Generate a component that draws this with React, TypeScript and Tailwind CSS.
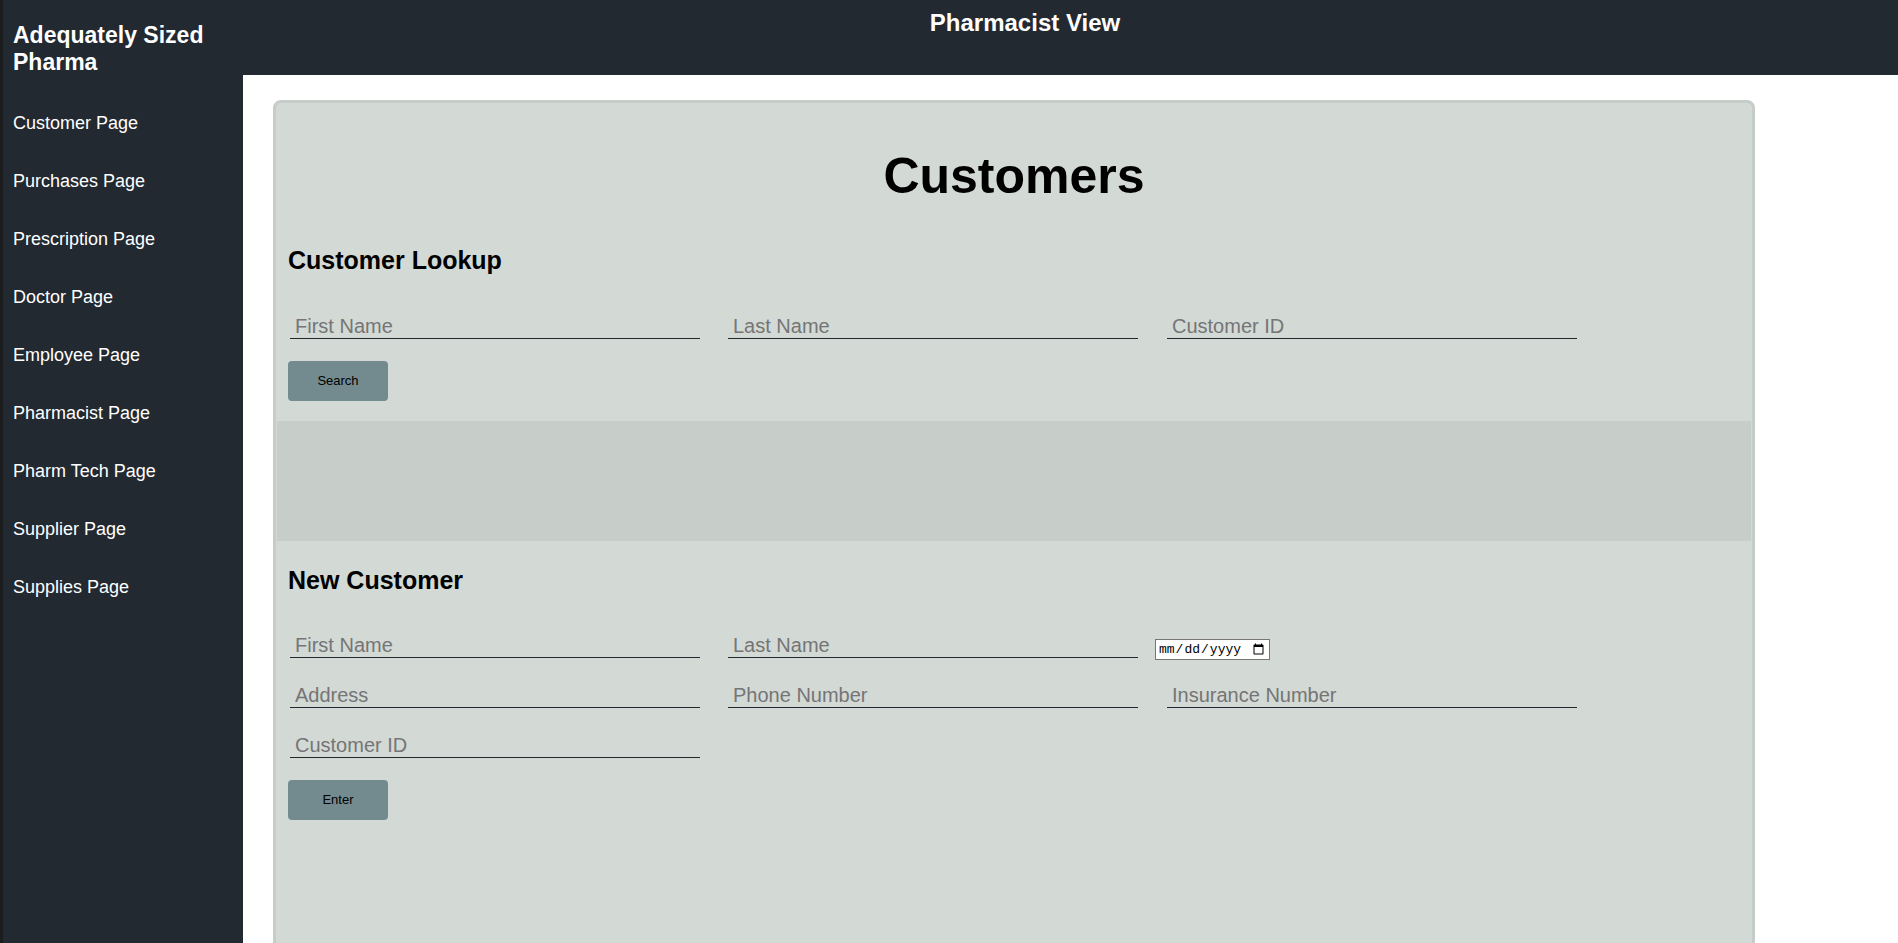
import React from "react";

const navItems = [
  "Customer Page",
  "Purchases Page",
  "Prescription Page",
  "Doctor Page",
  "Employee Page",
  "Pharmacist Page",
  "Pharm Tech Page",
  "Supplier Page",
  "Supplies Page",
];

function TextInput({ placeholder, className = "" }: { placeholder: string; className?: string }) {
  return (
    <input
      type="text"
      placeholder={placeholder}
      className={
        "w-[410px] h-[24px] bg-transparent border-b border-[#22282d] px-[5px] text-[20px] leading-[23px] text-black placeholder:text-[#757575] outline-none " +
        className
      }
    />
  );
}

function Btn({ label }: { label: string }) {
  return (
    <button className="w-[100px] h-[40px] rounded-[4px] bg-[#738a8e] text-[13px] text-black">
      {label}
    </button>
  );
}

export default function App() {
  return (
    <div
      className="flex h-[943px] w-full overflow-hidden bg-white"
      style={{ fontFamily: '"Liberation Sans", Arial, sans-serif' }}
    >
      {/* Sidebar */}
      <aside className="w-[243px] shrink-0 h-full bg-[#222931] border-l-[3px] border-[#1b1c1d] pl-[10px] text-white">
        <div className="pt-[22px] text-[23px] leading-[27px] font-bold">
          Adequately Sized
          <br />
          Pharma
        </div>
        <nav className="mt-[18px] flex flex-col">
          {navItems.map((n) => (
            <div key={n} className="h-[58px] text-[18px] leading-[58px]">
              {n}
            </div>
          ))}
        </nav>
      </aside>

      {/* Right column */}
      <div className="flex-1 flex flex-col min-w-0">
        <header className="h-[75px] shrink-0 bg-[#222931] flex justify-center pr-[91px] pt-[9px]">
          <div className="text-[24px] leading-[28px] font-bold text-white">Pharmacist View</div>
        </header>

        <main className="flex-1 bg-white pl-[30px] pt-[25px]">
          <div className="w-[1482px] h-[1000px] rounded-[8px] border-[3px] border-[#c6ccc8] bg-[#d3d9d5]">
            <h1 className="mt-[45px] text-center text-[50px] leading-[56px] font-bold text-black">
              Customers
            </h1>

            {/* Lookup */}
            <div className="pl-[12px]">
              <h2 className="mt-[42px] text-[25px] leading-[29px] font-bold text-black">
                Customer Lookup
              </h2>
              <div className="mt-[40px] flex items-start pl-[2px]">
                <TextInput placeholder="First Name" />
                <TextInput placeholder="Last Name" className="ml-[28px]" />
                <TextInput placeholder="Customer ID" className="ml-[29px]" />
              </div>
              <div className="mt-[22px]">
                <Btn label="Search" />
              </div>
            </div>

            <div className="mt-[20px] mx-px h-[120px] bg-[#c7cdc9]" />

            {/* New customer */}
            <div className="pl-[12px]">
              <h2 className="mt-[25px] text-[25px] leading-[29px] font-bold text-black">
                New Customer
              </h2>
              <div className="mt-[39px] flex items-start pl-[2px] h-[24px]">
                <TextInput placeholder="First Name" />
                <TextInput placeholder="Last Name" className="ml-[28px]" />
                <input
                  type="date"
                  className="ml-[17px] mt-[5px] w-[115px] h-[21px] bg-white border border-[#767676] px-[2px] text-[13px] text-black"
                  style={{ fontFamily: '"Liberation Mono", monospace' }}
                />
              </div>
              <div className="mt-[26px] flex items-start pl-[2px]">
                <TextInput placeholder="Address" />
                <TextInput placeholder="Phone Number" className="ml-[28px]" />
                <TextInput placeholder="Insurance Number" className="ml-[29px]" />
              </div>
              <div className="mt-[26px] flex items-start pl-[2px]">
                <TextInput placeholder="Customer ID" />
              </div>
              <div className="mt-[22px]">
                <Btn label="Enter" />
              </div>
            </div>
          </div>
        </main>
      </div>
    </div>
  );
}
